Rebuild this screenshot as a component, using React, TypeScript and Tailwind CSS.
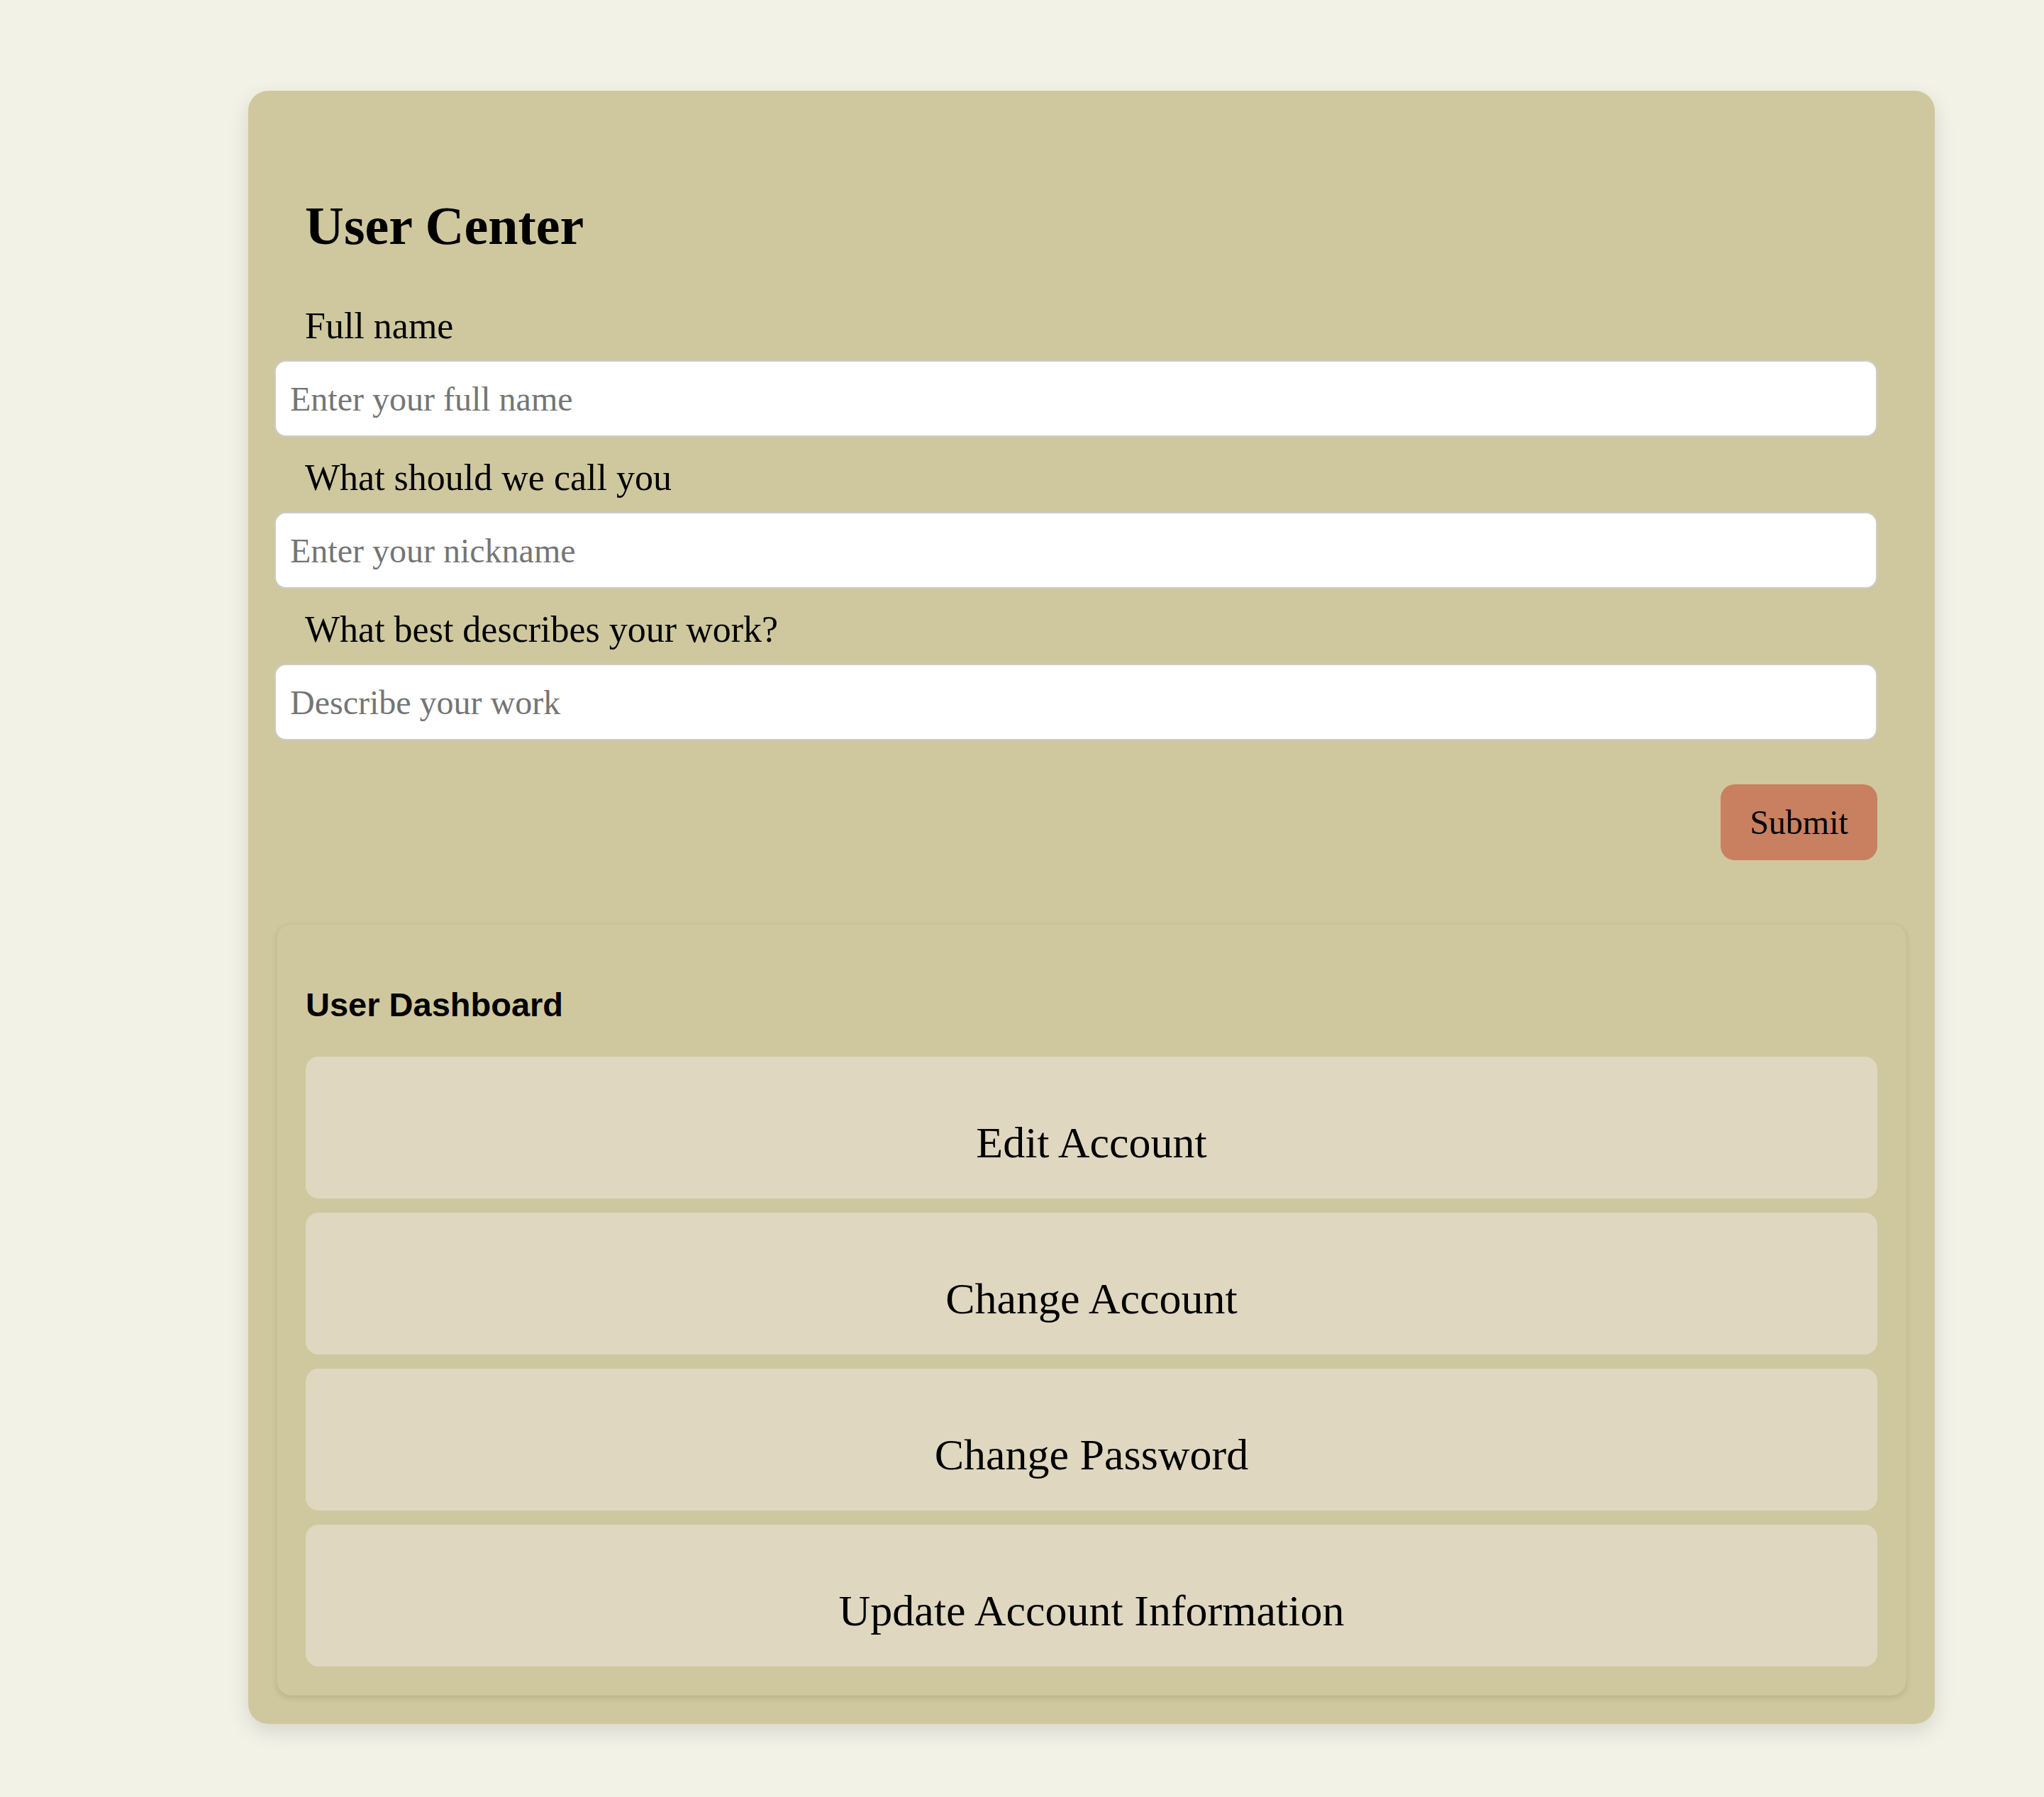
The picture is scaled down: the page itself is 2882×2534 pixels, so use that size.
import { useState, ChangeEvent } from "react";

const fields = [
    { key: "fullName", label: "Full name", placeholder: "Enter your full name" },
    { key: "nickname", label: "What should we call you", placeholder: "Enter your nickname" },
    { key: "work", label: "What best describes your work?", placeholder: "Describe your work" },
];

const actions = ["Edit Account", "Change Account", "Change Password", "Update Account Information"];

function App() {
    const [values, setValues] = useState<Record<string, string>>({ fullName: "", nickname: "", work: "" });

    return (
        <div className="min-h-screen w-full bg-[#f3f2e7] pt-[128px] pb-[104px] font-['Liberation_Serif',serif] text-black">
            <div className="ml-[350px] w-[2378px] rounded-[28px] bg-[#cfc89e] pl-[37px] pr-[40px] pt-[152px] pb-[40px] shadow-[0_10px_30px_rgba(0,0,0,0.12)]">
                <h1 className="ml-[43px] text-[76px] leading-none font-bold">User Center</h1>

                <form className="mt-[78px] mr-[41px] flex flex-col" onSubmit={(e) => e.preventDefault()}>
                    {fields.map((f, i) => (
                        <div key={f.key} className={i === 0 ? "flex flex-col" : "flex flex-col mt-[32px]"}>
                            <label className="ml-[43px] text-[52px] leading-none">{f.label}</label>
                            <input
                                type="text"
                                placeholder={f.placeholder}
                                value={values[f.key]}
                                onChange={(e: ChangeEvent<HTMLInputElement>) => setValues({ ...values, [f.key]: e.target.value })}
                                className="mt-[22px] h-[108px] w-full rounded-[16px] border-2 border-[#cccccc] bg-white px-[20px] text-[48px] outline-none placeholder:text-[#757575]"
                            />
                        </div>
                    ))}
                    <div className="mt-[62px] flex justify-end">
                        <button
                            type="submit"
                            className="h-[107px] w-[221px] rounded-[20px] bg-[#c88061] text-[48px] leading-none"
                        >
                            Submit
                        </button>
                    </div>
                </form>

                <div className="mt-[90px] ml-[3px] rounded-[20px] border border-[#c9c298] bg-[#cfc89e] px-[40px] pt-[89px] pb-[40px] shadow-[0_3px_8px_rgba(0,0,0,0.12)]">
                    <h2 className="font-['Liberation_Sans',Arial,sans-serif] text-[47px] leading-none font-bold">User Dashboard</h2>
                    <div className="mt-[50px] flex flex-col gap-[20px]">
                        {actions.map((a) => (
                            <button
                                key={a}
                                type="button"
                                className="flex h-[200px] w-full items-center justify-center rounded-[18px] bg-[#dfd7bf] pt-[42px] text-[62px] leading-none"
                            >
                                {a}
                            </button>
                        ))}
                    </div>
                </div>
            </div>
        </div>
    );
}

export default App;
